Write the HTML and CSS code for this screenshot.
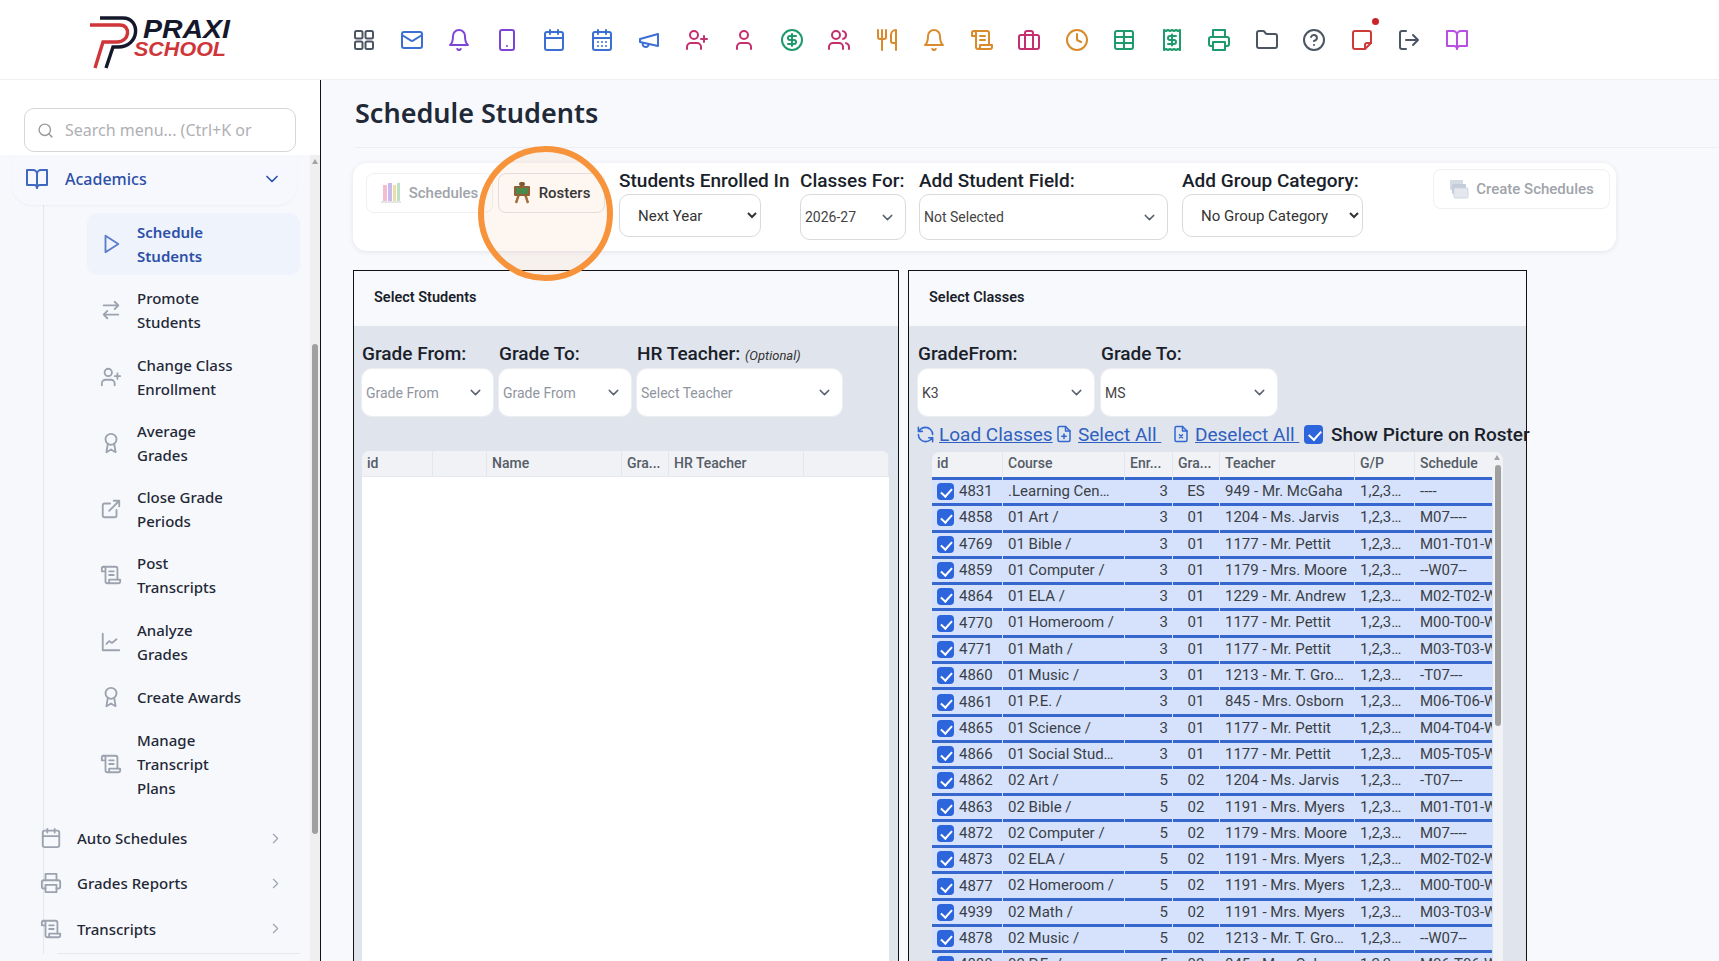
FILE: index.html
```html
<!DOCTYPE html>
<html lang="en">
<head>
  <meta charset="UTF-8" />
  <title>Schedule Students</title>
  <link rel="stylesheet" href="styles.css">
</head>
<body>
  <svg class="sprite" width="0" height="0">
    <symbol id="i-grid" viewBox="0 0 24 24"><rect x="3" y="3" width="7.5" height="7.5" rx="1.5"/><rect x="13.5" y="3" width="7.5" height="7.5" rx="1.5"/><rect x="3" y="13.5" width="7.5" height="7.5" rx="1.5"/><rect x="13.5" y="13.5" width="7.5" height="7.5" rx="1.5"/></symbol>
    <symbol id="i-mail" viewBox="0 0 24 24"><rect x="2" y="4" width="20" height="16" rx="2"/><path d="m2 7 8.97 5.7a1.94 1.94 0 0 0 2.06 0L22 7"/></symbol>
    <symbol id="i-bell" viewBox="0 0 24 24"><path d="M6 8a6 6 0 0 1 12 0c0 7 3 9 3 9H3s3-2 3-9"/><path d="M10.3 21a1.94 1.94 0 0 0 3.4 0"/></symbol>
    <symbol id="i-tablet" viewBox="0 0 24 24"><rect x="5" y="2" width="14" height="20" rx="2"/><path d="M12 18h.01"/></symbol>
    <symbol id="i-cal" viewBox="0 0 24 24"><path d="M8 2v4M16 2v4"/><rect x="3" y="4" width="18" height="18" rx="2"/><path d="M3 10h18"/></symbol>
    <symbol id="i-cal-days" viewBox="0 0 24 24"><path d="M8 2v4M16 2v4"/><rect x="3" y="4" width="18" height="18" rx="2"/><path d="M3 10h18M8 14h.01M12 14h.01M16 14h.01M8 18h.01M12 18h.01M16 18h.01"/></symbol>
    <symbol id="i-mega" viewBox="0 0 24 24"><path d="m3 11 18-5v12L3 14v-3z"/><path d="M11.6 16.8a3 3 0 1 1-5.8-1.6"/></symbol>
    <symbol id="i-user-plus" viewBox="0 0 24 24"><path d="M16 21v-2a4 4 0 0 0-4-4H6a4 4 0 0 0-4 4v2"/><circle cx="9" cy="7" r="4"/><path d="M19 8v6M22 11h-6"/></symbol>
    <symbol id="i-user" viewBox="0 0 24 24"><path d="M19 21v-2a4 4 0 0 0-4-4H9a4 4 0 0 0-4 4v2"/><circle cx="12" cy="7" r="4"/></symbol>
    <symbol id="i-dollar" viewBox="0 0 24 24"><circle cx="12" cy="12" r="10"/><path d="M16 8h-6a2 2 0 1 0 0 4h4a2 2 0 1 1 0 4H8M12 18V6"/></symbol>
    <symbol id="i-users" viewBox="0 0 24 24"><path d="M16 21v-2a4 4 0 0 0-4-4H6a4 4 0 0 0-4 4v2"/><circle cx="9" cy="7" r="4"/><path d="M22 21v-2a4 4 0 0 0-3-3.87M16 3.13a4 4 0 0 1 0 7.75"/></symbol>
    <symbol id="i-fork" viewBox="0 0 24 24"><path d="M3 2v7c0 1.1.9 2 2 2h4a2 2 0 0 0 2-2V2M7 2v20M21 15V2a5 5 0 0 0-5 5v6c0 1.1.9 2 2 2h3Zm0 0v7"/></symbol>
    <symbol id="i-scroll" viewBox="0 0 24 24"><path d="M8 21h12a2 2 0 0 0 2-2v-2H10v2a2 2 0 1 1-4 0V5a2 2 0 1 0-4 0v3h4"/><path d="M19 17V5a2 2 0 0 0-2-2H4M15 8h-5M15 12h-5"/></symbol>
    <symbol id="i-case" viewBox="0 0 24 24"><rect x="2" y="7" width="20" height="14" rx="2"/><path d="M16 21V5a2 2 0 0 0-2-2h-4a2 2 0 0 0-2 2v16"/></symbol>
    <symbol id="i-clock" viewBox="0 0 24 24"><circle cx="12" cy="12" r="10"/><path d="M12 6v6l4 2"/></symbol>
    <symbol id="i-table" viewBox="0 0 24 24"><rect x="3" y="3" width="18" height="18" rx="2"/><path d="M3 9h18M3 15h18M12 3v18"/></symbol>
    <symbol id="i-receipt" viewBox="0 0 24 24"><path d="M4 2v20l2-1 2 1 2-1 2 1 2-1 2 1 2-1 2 1V2l-2 1-2-1-2 1-2-1-2 1-2-1-2 1Z"/><path d="M16 8h-6a2 2 0 1 0 0 4h4a2 2 0 1 1 0 4H8M12 17.5v-11"/></symbol>
    <symbol id="i-print" viewBox="0 0 24 24"><path d="M6 9V2h12v7"/><path d="M6 18H4a2 2 0 0 1-2-2v-5a2 2 0 0 1 2-2h16a2 2 0 0 1 2 2v5a2 2 0 0 1-2 2h-2"/><rect x="6" y="14" width="12" height="8"/></symbol>
    <symbol id="i-folder" viewBox="0 0 24 24"><path d="M20 20a2 2 0 0 0 2-2V8a2 2 0 0 0-2-2h-7.9a2 2 0 0 1-1.69-.9L9.6 3.9A2 2 0 0 0 7.93 3H4a2 2 0 0 0-2 2v13a2 2 0 0 0 2 2Z"/></symbol>
    <symbol id="i-help" viewBox="0 0 24 24"><circle cx="12" cy="12" r="10"/><path d="M9.09 9a3 3 0 0 1 5.83 1c0 2-3 3-3 3M12 17h.01"/></symbol>
    <symbol id="i-note" viewBox="0 0 24 24"><path d="M5 3h14a2 2 0 0 1 2 2v10l-6 6H5a2 2 0 0 1-2-2V5a2 2 0 0 1 2-2z"/><path d="M15 21v-4a2 2 0 0 1 2-2h4"/></symbol>
    <symbol id="i-logout" viewBox="0 0 24 24"><path d="M9 21H5a2 2 0 0 1-2-2V5a2 2 0 0 1 2-2h4"/><path d="m16 17 5-5-5-5M21 12H9"/></symbol>
    <symbol id="i-book" viewBox="0 0 24 24"><path d="M2 3h6a4 4 0 0 1 4 4v14a3 3 0 0 0-3-3H2z"/><path d="M22 3h-6a4 4 0 0 0-4 4v14a3 3 0 0 1 3-3h7z"/></symbol>
    <symbol id="i-search" viewBox="0 0 24 24"><circle cx="11" cy="11" r="8"/><path d="m21 21-4.3-4.3"/></symbol>
    <symbol id="i-down" viewBox="0 0 24 24"><path d="m6 9 6 6 6-6"/></symbol>
    <symbol id="i-right" viewBox="0 0 24 24"><path d="m9 18 6-6-6-6"/></symbol>
    <symbol id="i-play" viewBox="0 0 24 24"><path d="M6 3l14 9-14 9z"/></symbol>
    <symbol id="i-swap" viewBox="0 0 24 24"><path d="m16 3 4 4-4 4M20 7H4M8 21l-4-4 4-4M4 17h16"/></symbol>
    <symbol id="i-award" viewBox="0 0 24 24"><circle cx="12" cy="8" r="6"/><path d="M15.48 12.89 17 22l-5-3-5 3 1.52-9.11"/></symbol>
    <symbol id="i-external" viewBox="0 0 24 24"><path d="M18 13v6a2 2 0 0 1-2 2H5a2 2 0 0 1-2-2V8a2 2 0 0 1 2-2h6M15 3h6v6M10 14 21 3"/></symbol>
    <symbol id="i-chart" viewBox="0 0 24 24"><path d="M3 3v18h18M7 14l3-3 3 2 5-4"/></symbol>
    <symbol id="i-refresh" viewBox="0 0 24 24"><path d="M21 12a9 9 0 0 0-9-9 9.75 9.75 0 0 0-6.74 2.74L3 8M3 3v5h5M3 12a9 9 0 0 0 9 9 9.75 9.75 0 0 0 6.74-2.74L21 16M16 16h5v5"/></symbol>
    <symbol id="i-file-plus" viewBox="0 0 24 24"><path d="M14 2H6a2 2 0 0 0-2 2v16a2 2 0 0 0 2 2h12a2 2 0 0 0 2-2V8z"/><path d="M14 2v6h6M12 12v6M9 15h6"/></symbol>
    <symbol id="i-file-x" viewBox="0 0 24 24"><path d="M14 2H6a2 2 0 0 0-2 2v16a2 2 0 0 0 2 2h12a2 2 0 0 0 2-2V8z"/><path d="M14 2v6h6M10 13l4 4M14 13l-4 4"/></symbol>
  </svg>

  <header class="topbar">
    <div class="logo">
      <svg width="160" height="60" viewBox="0 0 160 60">
        <path class="logo-dark" d="M20 8H43C61 8 60 37 38 37H33L26 58"/>
        <path class="logo-red" d="M10 15H40C51 15 50 32 37 32H23L15 58"/>
        <text class="logo-praxi" x="63" y="28" textLength="87" lengthAdjust="spacingAndGlyphs">PRAXI</text>
        <text class="logo-school" x="54" y="46" textLength="92" lengthAdjust="spacingAndGlyphs">SCHOOL</text>
      </svg>
    </div>
    <nav class="top-icons">
      <svg class="c-gray"><use href="#i-grid"/></svg>
      <svg class="c-blue"><use href="#i-mail"/></svg>
      <svg class="c-purple"><use href="#i-bell"/></svg>
      <svg class="c-purple"><use href="#i-tablet"/></svg>
      <svg class="c-blue"><use href="#i-cal"/></svg>
      <svg class="c-blue"><use href="#i-cal-days"/></svg>
      <svg class="c-blue"><use href="#i-mega"/></svg>
      <svg class="c-pink"><use href="#i-user-plus"/></svg>
      <svg class="c-pink"><use href="#i-user"/></svg>
      <svg class="c-green"><use href="#i-dollar"/></svg>
      <svg class="c-pink"><use href="#i-users"/></svg>
      <svg class="c-orange"><use href="#i-fork"/></svg>
      <svg class="c-orange"><use href="#i-bell"/></svg>
      <svg class="c-orange"><use href="#i-scroll"/></svg>
      <svg class="c-pink"><use href="#i-case"/></svg>
      <svg class="c-orange"><use href="#i-clock"/></svg>
      <svg class="c-green"><use href="#i-table"/></svg>
      <svg class="c-green"><use href="#i-receipt"/></svg>
      <svg class="c-green"><use href="#i-print"/></svg>
      <svg class="c-gray"><use href="#i-folder"/></svg>
      <svg class="c-gray"><use href="#i-help"/></svg>
      <span class="note-wrap"><svg class="c-red"><use href="#i-note"/></svg><i class="note-dot"></i></span>
      <svg class="c-gray"><use href="#i-logout"/></svg>
      <svg class="c-violet"><use href="#i-book"/></svg>
    </nav>
  </header>

  <div class="layout">
    <aside class="sidebar">
      <div class="search-area">
        <div class="search-box">
          <svg><use href="#i-search"/></svg>
          <span>Search menu... (Ctrl+K or</span>
        </div>
      </div>
      <div class="menu-wrap">
        <div class="menu">
          <div class="menu-head">
            <svg class="head-icon"><use href="#i-book"/></svg>
            <span>Academics</span>
            <svg class="head-chev"><use href="#i-down"/></svg>
          </div>
          <div class="sub-list">
            <a class="sub-item active"><svg><use href="#i-play"/></svg><span>Schedule<br>Students</span></a>
            <a class="sub-item"><svg><use href="#i-swap"/></svg><span>Promote<br>Students</span></a>
            <a class="sub-item"><svg><use href="#i-user-plus"/></svg><span>Change Class<br>Enrollment</span></a>
            <a class="sub-item"><svg><use href="#i-award"/></svg><span>Average<br>Grades</span></a>
            <a class="sub-item"><svg><use href="#i-external"/></svg><span>Close Grade<br>Periods</span></a>
            <a class="sub-item"><svg><use href="#i-scroll"/></svg><span>Post<br>Transcripts</span></a>
            <a class="sub-item"><svg><use href="#i-chart"/></svg><span>Analyze<br>Grades</span></a>
            <a class="sub-item one"><svg><use href="#i-award"/></svg><span>Create Awards</span></a>
            <a class="sub-item three"><svg><use href="#i-scroll"/></svg><span>Manage<br>Transcript<br>Plans</span></a>
            <a class="top-item"><svg><use href="#i-cal"/></svg><span>Auto Schedules</span><svg class="chev"><use href="#i-right"/></svg></a>
            <a class="top-item"><svg><use href="#i-print"/></svg><span>Grades Reports</span><svg class="chev"><use href="#i-right"/></svg></a>
            <a class="top-item"><svg><use href="#i-scroll"/></svg><span>Transcripts</span><svg class="chev"><use href="#i-right"/></svg></a>
            <div class="menu-rule"></div>
          </div>
        </div>
        <div class="scroll-track">
          <i class="scroll-arrow"></i>
          <div class="scroll-thumb"></div>
        </div>
      </div>
    </aside>

    <main class="main">
      <h1 class="page-title">Schedule Students</h1>

      <section class="toolbar">
        <button class="tab tab-off">
          <svg width="20" height="22" viewBox="0 0 20 22"><rect x="2" y="3" width="4" height="16" fill="#f0a6c4"/><rect x="7" y="1" width="4" height="18" fill="#b9a2e8"/><rect x="12" y="3" width="3" height="16" fill="#e8d48a"/><rect x="16" y="1" width="3" height="18" fill="#a9d8b0"/><rect x="0" y="19" width="20" height="2" fill="#ddd"/></svg>
          Schedules
        </button>
        <button class="tab">
          <svg width="18" height="22" viewBox="0 0 18 22"><path d="M9 3 3 21M9 3l6 18" stroke="#9a6a3a" stroke-width="2.4" fill="none"/><rect x="6" y="0" width="6" height="4" rx="2" fill="#7a5230"/><rect x="1" y="4" width="16" height="10" rx="1" fill="#8a5e34"/><rect x="3" y="6" width="12" height="6" fill="#3f8a4e"/></svg>
          Rosters
        </button>

        <div class="field f-enrolled">
          <label class="big-label">Students Enrolled In</label>
          <select class="native"><option>Next Year</option></select>
        </div>
        <div class="field f-classes">
          <label class="big-label">Classes For:</label>
          <div class="pick tall">2026-27<svg><use href="#i-down"/></svg></div>
        </div>
        <div class="field f-student">
          <label class="big-label">Add Student Field:</label>
          <div class="pick tall">Not Selected<svg><use href="#i-down"/></svg></div>
        </div>
        <div class="field f-group">
          <label class="big-label">Add Group Category:</label>
          <select class="native"><option>No Group Category</option></select>
        </div>

        <button class="create-btn">
          <svg width="20" height="20" viewBox="0 0 20 20"><rect x="1" y="1" width="13" height="10" rx="1" fill="#d5dbe4"/><rect x="3" y="5" width="14" height="10" rx="1" fill="#c3ccd8"/><rect x="5" y="9" width="14" height="10" rx="1" fill="#e4e8ee" stroke="#cfd6df"/></svg>
          Create Schedules
        </button>
      </section>

      <div class="panels">
        <section class="panel panel-left">
          <h2 class="panel-head">Select Students</h2>
          <div class="panel-body">
            <div class="pick-row">
              <div class="pick-col w131"><label class="big-label">Grade From:</label><div class="pick muted">Grade From<svg><use href="#i-down"/></svg></div></div>
              <div class="pick-col w132"><label class="big-label">Grade To:</label><div class="pick muted">Grade From<svg><use href="#i-down"/></svg></div></div>
              <div class="pick-col w205"><label class="big-label">HR Teacher: <em>(Optional)</em></label><div class="pick muted">Select Teacher<svg><use href="#i-down"/></svg></div></div>
            </div>
            <div class="empty-grid">
              <div class="empty-head">
                <div>id</div><div></div><div>Name</div><div>Gra...</div><div>HR Teacher</div><div></div>
              </div>
            </div>
          </div>
        </section>

        <section class="panel panel-right">
          <h2 class="panel-head">Select Classes</h2>
          <div class="panel-body">
            <div class="pick-row">
              <div class="pick-col w176"><label class="big-label">GradeFrom:</label><div class="pick">K3<svg><use href="#i-down"/></svg></div></div>
              <div class="pick-col w176"><label class="big-label">Grade To:</label><div class="pick">MS<svg><use href="#i-down"/></svg></div></div>
            </div>
            <div class="actions">
              <svg class="act-refresh"><use href="#i-refresh"/></svg><a class="act-load">Load Classes</a>
              <svg class="act-file"><use href="#i-file-plus"/></svg><a class="act-select">Select All&nbsp;</a>
              <svg class="act-file"><use href="#i-file-x"/></svg><a class="act-deselect">Deselect All&nbsp;</a>
              <input class="check big" type="checkbox" checked>
              <span class="show-pic">Show Picture on Roster</span>
            </div>
            <div class="grid">
              <div class="grid-main">
                <div class="grid-head">
                  <div>id</div><div>Course</div><div>Enr...</div><div>Gra...</div><div>Teacher</div><div>G/P</div><div>Schedule</div>
                </div>
                <div class="row"><div class="c-id"><input class="check" type="checkbox" checked>4831</div><div>.Learning Cen…</div><div class="c-enr">3</div><div class="c-gr">ES</div><div>949 - Mr. McGaha</div><div>1,2,3…</div><div>----</div></div>
                <div class="row"><div class="c-id"><input class="check" type="checkbox" checked>4858</div><div>01 Art /</div><div class="c-enr">3</div><div class="c-gr">01</div><div>1204 - Ms. Jarvis</div><div>1,2,3…</div><div>M07----</div></div>
                <div class="row"><div class="c-id"><input class="check" type="checkbox" checked>4769</div><div>01 Bible /</div><div class="c-enr">3</div><div class="c-gr">01</div><div>1177 - Mr. Pettit</div><div>1,2,3…</div><div>M01-T01-W01</div></div>
                <div class="row"><div class="c-id"><input class="check" type="checkbox" checked>4859</div><div>01 Computer /</div><div class="c-enr">3</div><div class="c-gr">01</div><div>1179 - Mrs. Moore</div><div>1,2,3…</div><div>--W07--</div></div>
                <div class="row"><div class="c-id"><input class="check" type="checkbox" checked>4864</div><div>01 ELA /</div><div class="c-enr">3</div><div class="c-gr">01</div><div>1229 - Mr. Andrew</div><div>1,2,3…</div><div>M02-T02-W02</div></div>
                <div class="row"><div class="c-id"><input class="check" type="checkbox" checked>4770</div><div>01 Homeroom /</div><div class="c-enr">3</div><div class="c-gr">01</div><div>1177 - Mr. Pettit</div><div>1,2,3…</div><div>M00-T00-W00</div></div>
                <div class="row"><div class="c-id"><input class="check" type="checkbox" checked>4771</div><div>01 Math /</div><div class="c-enr">3</div><div class="c-gr">01</div><div>1177 - Mr. Pettit</div><div>1,2,3…</div><div>M03-T03-W03</div></div>
                <div class="row"><div class="c-id"><input class="check" type="checkbox" checked>4860</div><div>01 Music /</div><div class="c-enr">3</div><div class="c-gr">01</div><div>1213 - Mr. T. Gro…</div><div>1,2,3…</div><div>-T07---</div></div>
                <div class="row"><div class="c-id"><input class="check" type="checkbox" checked>4861</div><div>01 P.E. /</div><div class="c-enr">3</div><div class="c-gr">01</div><div>845 - Mrs. Osborn</div><div>1,2,3…</div><div>M06-T06-W06</div></div>
                <div class="row"><div class="c-id"><input class="check" type="checkbox" checked>4865</div><div>01 Science /</div><div class="c-enr">3</div><div class="c-gr">01</div><div>1177 - Mr. Pettit</div><div>1,2,3…</div><div>M04-T04-W04</div></div>
                <div class="row"><div class="c-id"><input class="check" type="checkbox" checked>4866</div><div>01 Social Stud…</div><div class="c-enr">3</div><div class="c-gr">01</div><div>1177 - Mr. Pettit</div><div>1,2,3…</div><div>M05-T05-W05</div></div>
                <div class="row"><div class="c-id"><input class="check" type="checkbox" checked>4862</div><div>02 Art /</div><div class="c-enr">5</div><div class="c-gr">02</div><div>1204 - Ms. Jarvis</div><div>1,2,3…</div><div>-T07---</div></div>
                <div class="row"><div class="c-id"><input class="check" type="checkbox" checked>4863</div><div>02 Bible /</div><div class="c-enr">5</div><div class="c-gr">02</div><div>1191 - Mrs. Myers</div><div>1,2,3…</div><div>M01-T01-W01</div></div>
                <div class="row"><div class="c-id"><input class="check" type="checkbox" checked>4872</div><div>02 Computer /</div><div class="c-enr">5</div><div class="c-gr">02</div><div>1179 - Mrs. Moore</div><div>1,2,3…</div><div>M07----</div></div>
                <div class="row"><div class="c-id"><input class="check" type="checkbox" checked>4873</div><div>02 ELA /</div><div class="c-enr">5</div><div class="c-gr">02</div><div>1191 - Mrs. Myers</div><div>1,2,3…</div><div>M02-T02-W02</div></div>
                <div class="row"><div class="c-id"><input class="check" type="checkbox" checked>4877</div><div>02 Homeroom /</div><div class="c-enr">5</div><div class="c-gr">02</div><div>1191 - Mrs. Myers</div><div>1,2,3…</div><div>M00-T00-W00</div></div>
                <div class="row"><div class="c-id"><input class="check" type="checkbox" checked>4939</div><div>02 Math /</div><div class="c-enr">5</div><div class="c-gr">02</div><div>1191 - Mrs. Myers</div><div>1,2,3…</div><div>M03-T03-W03</div></div>
                <div class="row"><div class="c-id"><input class="check" type="checkbox" checked>4878</div><div>02 Music /</div><div class="c-enr">5</div><div class="c-gr">02</div><div>1213 - Mr. T. Gro…</div><div>1,2,3…</div><div>--W07--</div></div>
                <div class="row"><div class="c-id"><input class="check" type="checkbox" checked>4880</div><div>02 P.E. /</div><div class="c-enr">5</div><div class="c-gr">02</div><div>845 - Mrs. Osborn</div><div>1,2,3…</div><div>M06-T06-W06</div></div>
              </div>
              <div class="grid-scroll">
                <i class="scroll-arrow"></i>
                <div class="grid-thumb"></div>
              </div>
            </div>
          </div>
        </section>
      </div>

      <div class="highlight"></div>
    </main>
  </div>
</body>
</html>
```

FILE: styles.css
```css
* {
  box-sizing: border-box;
}

html, body {
  height: 100%;
}

body {
  margin: 0;
  background-color: #f8f9fc;
  color: #1f2937;
  font-family: Roboto, "Noto Sans", sans-serif;
  overflow: hidden;
}

.sprite {
  position: absolute;
}

svg use {
  fill: none;
}

/* top bar */
.topbar {
  display: flex;
  align-items: center;
  height: 80px;
  background-color: #fff;
  border-bottom: 1px solid #eef0f3;
}

.logo {
  width: 352px;
  padding-left: 80px;
  padding-top: 0;
  height: 80px;
}

.logo svg {
  display: block;
  margin-top: 10px;
}

.logo-dark, .logo-red {
  fill: none;
  stroke-width: 3.4;
}

.logo-dark {
  stroke: #15182a;
}

.logo-red {
  stroke: #d0353a;
}

.logo-praxi, .logo-school {
  font-family: "Liberation Sans", sans-serif;
  font-weight: 700;
  font-style: italic;
}

.logo-praxi {
  font-size: 25px;
  fill: #15182a;
}

.logo-school {
  font-size: 20px;
  fill: #d0353a;
}

.top-icons {
  display: flex;
  align-items: center;
  gap: 23.5px;
}

.top-icons svg {
  display: block;
  width: 24px;
  height: 24px;
  fill: none;
  stroke: currentColor;
  stroke-width: 2;
  stroke-linecap: round;
  stroke-linejoin: round;
}

.c-gray { color: #4b5563; }
.c-blue { color: #3b6fd4; }
.c-purple { color: #7c45d6; }
.c-pink { color: #c4306f; }
.c-green { color: #1f9a6c; }
.c-orange { color: #d98a2b; }
.c-red { color: #cc3a3a; }
.c-violet { color: #b94fe0; }

.note-wrap {
  position: relative;
  display: block;
}

.note-dot {
  position: absolute;
  top: -10px;
  right: -5px;
  width: 7px;
  height: 7px;
  border-radius: 50%;
  background-color: #cc2529;
}

/* page */
.layout {
  display: flex;
  height: 881px;
}

.sidebar {
  display: flex;
  flex-direction: column;
  width: 321px;
  flex: none;
  background-color: #fff;
  border-right: 1px solid #111;
}

.search-area {
  height: 75px;
  padding: 28px 24px 0;
}

.search-box {
  display: flex;
  align-items: center;
  gap: 11px;
  height: 44px;
  padding-left: 12px;
  border: 1px solid #d6d6d8;
  border-radius: 10px;
  color: #b0b0b4;
  font-family: "Noto Sans", sans-serif;
  font-size: 16px;
}

.search-box svg {
  width: 17px;
  height: 17px;
  fill: none;
  stroke: #9a9a9e;
  stroke-width: 2;
  stroke-linecap: round;
}

.menu-wrap {
  display: flex;
  flex: 1;
  min-height: 0;
  background-color: #f7f8fc;
}

.menu {
  flex: 1;
  overflow: hidden;
  font-family: "Noto Sans", sans-serif;
  font-size: 15px;
  font-weight: 500;
}

.menu-head {
  position: relative;
  z-index: 1;
  display: flex;
  align-items: center;
  height: 50px;
  margin: 0 13px 0 12px;
  padding: 0 15px 2px 13px;
  background-color: #f6f8fd;
  border-radius: 0 0 20px 20px;
  color: #2d4fa8;
  font-size: 16px;
  box-shadow: 0 1px 2px rgba(40, 60, 110, 0.05);
}

.head-icon {
  width: 24px;
  height: 24px;
  margin-right: 16px;
  fill: none;
  stroke: #3f68c0;
  stroke-width: 2;
  stroke-linejoin: round;
}

.head-chev {
  width: 20px;
  height: 20px;
  margin-left: auto;
  fill: none;
  stroke: #2d4fa8;
  stroke-width: 2;
  stroke-linecap: round;
  stroke-linejoin: round;
}

.sub-list {
  display: flex;
  flex-direction: column;
  gap: 4.3px;
  margin-left: 43px;
  padding: 8px 10px 0 0;
  border-left: 1px solid #e3e6ec;
}

.sub-item {
  display: flex;
  align-items: center;
  gap: 15px;
  height: 62px;
  margin-left: 43px;
  padding-left: 13px;
  border-radius: 10px;
  line-height: 24px;
  color: #1f2937;
}

.sub-item.one {
  height: 40px;
}

.sub-item.three {
  height: 86px;
  margin-bottom: 6px;
}

.sub-item.active {
  background-color: #eef3fc;
  color: #2d4fa8;
  font-weight: 600;
}

.sub-item svg, .top-item svg {
  flex: none;
  width: 22px;
  height: 22px;
  fill: none;
  stroke: #9ca3af;
  stroke-width: 2;
  stroke-linecap: round;
  stroke-linejoin: round;
}

.sub-item.active svg {
  stroke: #5a7cc8;
}

.top-item {
  display: flex;
  align-items: center;
  gap: 15px;
  height: 41px;
  margin-left: -18px;
  padding-left: 14px;
  color: #1f2937;
}

.top-item .chev {
  width: 17px;
  height: 17px;
  margin-left: auto;
  margin-right: 16px;
  stroke-width: 1.6;
}

.menu-rule {
  margin: -1px 0 0 13px;
  border-top: 1px solid #e6e8ee;
}

.scroll-track {
  position: relative;
  width: 10px;
  flex: none;
  background-color: #efefef;
}

.scroll-arrow {
  position: absolute;
  top: 4px;
  left: 2px;
  border-left: 3px solid transparent;
  border-right: 3px solid transparent;
  border-bottom: 5px solid #a3a3a3;
}

.scroll-thumb {
  width: 6px;
  height: 490px;
  margin: 189px 0 0 2px;
  border-radius: 3px;
  background-color: #a0a0a0;
}

/* main */
.main {
  position: relative;
  flex: 1;
  min-width: 0;
}

.page-title {
  height: 68px;
  margin: 0 0 15px 34px;
  border-bottom: 1px solid #eceef2;
  font-family: "Noto Sans", sans-serif;
  font-size: 27px;
  font-weight: 600;
  line-height: 66px;
  color: #1f2937;
}

.toolbar {
  display: flex;
  align-items: flex-start;
  width: 1263px;
  height: 88px;
  margin-left: 32px;
  padding: 3px 6px 0 13px;
  background-color: #fff;
  border-radius: 14px;
  box-shadow: 0 1px 5px rgba(30, 50, 90, 0.1);
}

.tab {
  display: flex;
  align-items: center;
  justify-content: center;
  gap: 8px;
  height: 40px;
  margin-top: 7px;
  padding: 0;
  background-color: #fff;
  border: 1px solid #e2e4e8;
  border-radius: 8px;
  font-family: Roboto, sans-serif;
  font-size: 15px;
  font-weight: 500;
  color: #2a2f38;
}

.tab-off {
  width: 127px;
  margin-right: 5px;
  border-color: #eff0f3;
  color: #a0a4aa;
}

.tab-off svg {
  opacity: 0.75;
}

.tab:not(.tab-off) {
  width: 107px;
  margin-right: 14px;
}

.field {
  display: flex;
  flex-direction: column;
}

.big-label {
  display: block;
  height: 28px;
  font-size: 19px;
  font-weight: 500;
  line-height: 30px;
  color: #1a1f2b;
  white-space: nowrap;
}

.big-label em {
  font-size: 13px;
  font-weight: 400;
  color: #333;
}

.f-enrolled {
  width: 170px;
  margin-right: 11px;
}

.f-classes {
  width: 106px;
  margin-right: 13px;
}

.f-student {
  width: 249px;
  margin-right: 14px;
}

.f-group {
  width: 181px;
}

.native {
  width: 142px;
  height: 43px;
  padding-left: 14px;
  background-color: #fff;
  border: 1px solid #d8dade;
  border-radius: 10px;
  font-family: Roboto, sans-serif;
  font-size: 15px;
  color: #333;
}

.f-group .native {
  width: 181px;
}

.pick {
  display: flex;
  align-items: center;
  justify-content: space-between;
  height: 47px;
  padding: 0 9px 0 4px;
  background-color: #fff;
  border-radius: 10px;
  font-size: 14px;
  color: #444;
  box-shadow: 0 0 0 1px #eceef2;
}

.pick.tall {
  height: 46px;
  box-shadow: none;
  border: 1px solid #d8dade;
}

.pick.muted {
  color: #8f959e;
}

.pick svg {
  width: 17px;
  height: 17px;
  fill: none;
  stroke: #5a6270;
  stroke-width: 2;
  stroke-linecap: round;
  stroke-linejoin: round;
}

.create-btn {
  display: flex;
  align-items: center;
  justify-content: center;
  gap: 7px;
  width: 177px;
  height: 40px;
  margin-left: auto;
  margin-top: 3px;
  background-color: #fff;
  border: 1px solid #eff0f3;
  border-radius: 8px;
  font-family: Roboto, sans-serif;
  font-size: 15px;
  font-weight: 500;
  color: #a0a4aa;
}

.panels {
  display: flex;
  gap: 9px;
  margin: 19px 0 0 32px;
}

.panel {
  flex: none;
  height: 760px;
  border: 1px solid #111;
  background-color: #e0e4ec;
}

.panel-left {
  width: 546px;
}

.panel-right {
  width: 619px;
}

.panel-head {
  height: 55px;
  margin: 0;
  padding-left: 20px;
  background-color: #f8f9fc;
  font-size: 14.5px;
  font-weight: 600;
  line-height: 54px;
  color: #1a1f2b;
}

.panel-body {
  padding: 13px 0 0 8px;
}

.panel-right .panel-body {
  padding-left: 9px;
}

.pick-row {
  display: flex;
  gap: 6px;
}

.pick-row .big-label {
  height: 30px;
}

.w131 { width: 131px; }
.w132 { width: 132px; }
.w205 { width: 205px; }
.w176 { width: 176px; }

.pick-col {
  margin-top: 0;
}

.pick-col + .pick-col {
  margin-left: 0;
}

.panel-right .pick-row {
  gap: 7px;
}

.empty-grid {
  width: 527px;
  height: 600px;
  margin: 35px 0 0 0;
  background-color: #fff;
  border-radius: 8px 8px 0 0;
  overflow: hidden;
}

.empty-head {
  display: grid;
  grid-template-columns: 71px 54px 135px 47px 135px 1fr;
  height: 26px;
  background-color: #f0f2f6;
  border-bottom: 1px solid #e6e8ee;
  font-size: 14px;
  font-weight: 500;
  line-height: 25px;
  color: #555c66;
}

.empty-head div {
  padding-left: 5px;
  border-right: 1px solid #e3e6ec;
}

.actions {
  display: flex;
  align-items: center;
  height: 24px;
  margin: 6px 0 6px -2px;
  font-size: 19px;
  color: #2f5fc0;
}

.actions a {
  text-decoration: underline;
  white-space: nowrap;
}

.actions svg {
  flex: none;
  fill: none;
  stroke: #3167d2;
  stroke-width: 2;
  stroke-linecap: round;
  stroke-linejoin: round;
}

.act-refresh {
  width: 19px;
  height: 19px;
  margin-right: 4px;
}

.act-file {
  width: 18px;
  height: 18px;
  margin-right: 5px;
}

.act-load {
  width: 103px;
  margin-right: 13px;
}

.act-select {
  width: 80px;
  margin-right: 14px;
}

.act-deselect {
  width: 98px;
  margin-right: 11px;
}

.show-pic {
  font-weight: 500;
  color: #1a1f2b;
  white-space: nowrap;
}

.check {
  appearance: none;
  position: relative;
  flex: none;
  width: 17px;
  height: 17px;
  margin: 0 5px 0 0;
  background-color: #2d66dc;
  border-radius: 4px;
}

.check::after {
  content: "";
  position: absolute;
  left: 6px;
  top: 3px;
  width: 5px;
  height: 9px;
  border: solid #fff;
  border-width: 0 2px 2px 0;
  transform: rotate(42deg);
}

.check.big {
  width: 19px;
  height: 19px;
  margin-right: 8px;
}

.check.big::after {
  left: 6.5px;
  top: 3px;
  width: 6px;
  height: 10px;
}

.grid {
  display: flex;
  width: 571px;
  margin-left: 14px;
  height: 600px;
  overflow: hidden;
  border-radius: 8px 8px 0 0;
  background-color: #f0f2f6;
}

.grid-main {
  width: 561px;
  flex: none;
  font-size: 15px;
  color: #3a3f47;
}

.grid-head, .row {
  display: grid;
  grid-template-columns: 71px 122px 48px 47px 135px 60px 78px;
}

.grid-head {
  height: 25px;
  font-size: 14px;
  font-weight: 500;
  line-height: 23px;
  color: #555c66;
}

.grid-head div {
  padding-left: 5px;
  border-right: 1px solid #e3e6ec;
}

.grid-head div:nth-child(7) {
  border-right: none;
}

.row {
  height: 26.3px;
  background-color: #d6e2fb;
}

.row div {
  margin-right: 1px;
  padding-left: 5px;
  border-top: 3px solid #3567cf;
  line-height: 23px;
  white-space: nowrap;
  overflow: hidden;
}

.row .c-id {
  display: flex;
  align-items: center;
}

.row .c-enr {
  padding-right: 4px;
  text-align: right;
}

.row .c-gr {
  padding-left: 0;
  text-align: center;
}

.grid-scroll {
  position: relative;
  flex: 1;
}

.grid-scroll .scroll-arrow {
  top: 3px;
  left: 1px;
}

.grid-thumb {
  width: 6px;
  height: 261px;
  margin: 13px 0 0 2px;
  border-radius: 3px;
  background-color: #a0a0a0;
}

/* orange circle drawn over the page */
.highlight {
  position: absolute;
  left: 157px;
  top: 66px;
  width: 135px;
  height: 135px;
  border: 6px solid #f7933a;
  border-radius: 50%;
  background-color: rgba(247, 147, 58, 0.07);
}
```
